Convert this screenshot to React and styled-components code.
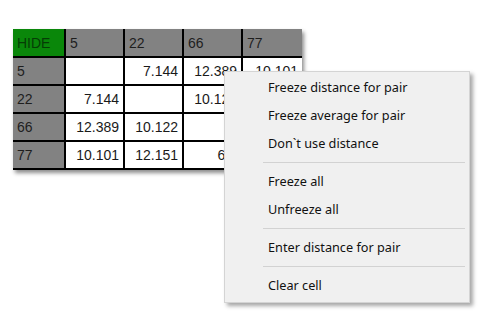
import styled, { createGlobalStyle } from "styled-components";

const GlobalStyle = createGlobalStyle`
  html, body {
    margin: 0;
    padding: 0;
    background: #ffffff;
  }
  body {
    width: 500px;
    height: 323px;
    overflow: hidden;
  }
`;

const Page = styled.div`
  position: relative;
  width: 500px;
  height: 323px;
  padding: 29px 0 0 13px;
  box-sizing: border-box;
`;

const Grid = styled.div`
  display: grid;
  grid-template-columns: 51px 57px 57px 57px 59px;
  grid-template-rows: 27px repeat(4, 26px);
  gap: 2px;
  width: max-content;
  padding-bottom: 2px;
  background: #000;
  box-shadow: 2px 3px 4px rgba(0, 0, 0, 0.45);
  font-family: "Liberation Sans", Arial, sans-serif;
  font-size: 14px;
`;

const Cell = styled.div`
  display: flex;
  align-items: center;
  justify-content: ${(p) => (p.$head ? "flex-start" : "flex-end")};
  padding: ${(p) => (p.$head ? "0 0 0 4px" : "0 4px 0 0")};
  background: ${(p) => (p.$green ? "#0a870a" : p.$head ? "#828282" : "#ffffff")};
  color: ${(p) => (p.$green ? "#053d05" : p.$head ? "#1e1e1e" : "#1a1a1a")};
`;

const Menu = styled.div`
  position: absolute;
  left: 224px;
  top: 71px;
  width: 246px;
  box-sizing: border-box;
  padding: 1px 0 3px;
  background: #f0f0f0;
  border: 1px solid #d4d4d4;
  box-shadow: 3px 3px 4px rgba(0, 0, 0, 0.35);
  font-family: "Noto Sans", "Open Sans", sans-serif;
  font-size: 12.7px;
  color: #111;
`;

const Item = styled.div`
  height: 28px;
  display: flex;
  align-items: center;
  padding-left: 43px;
`;

const Separator = styled.div`
  height: 1px;
  margin: 5px 4px 4px 38px;
  background: #d2d2d2;
`;

const header = ["HIDE", "5", "22", "66", "77"];
const rows = [
  ["5", "", "7.144", "12.389", "10.101"],
  ["22", "7.144", "", "10.122", "12.151"],
  ["66", "12.389", "10.122", "", "6.8"],
  ["77", "10.101", "12.151", "6.8", ""],
];

const menu = [
  "Freeze distance for pair",
  "Freeze average for pair",
  "Don`t use distance",
  "-",
  "Freeze all",
  "Unfreeze all",
  "-",
  "Enter distance for pair",
  "-",
  "Clear cell",
];

export default function App() {
  return (
    <Page>
      <GlobalStyle />
      <Grid>
        {header.map((h, i) => (
          <Cell key={"h" + i} $head $green={i === 0}>
            {h}
          </Cell>
        ))}
        {rows.map((r, ri) =>
          r.map((v, ci) => (
            <Cell key={ri + "-" + ci} $head={ci === 0}>
              {v}
            </Cell>
          ))
        )}
      </Grid>
      <Menu>
        {menu.map((m, i) =>
          m === "-" ? <Separator key={i} /> : <Item key={i}>{m}</Item>
        )}
      </Menu>
    </Page>
  );
}
